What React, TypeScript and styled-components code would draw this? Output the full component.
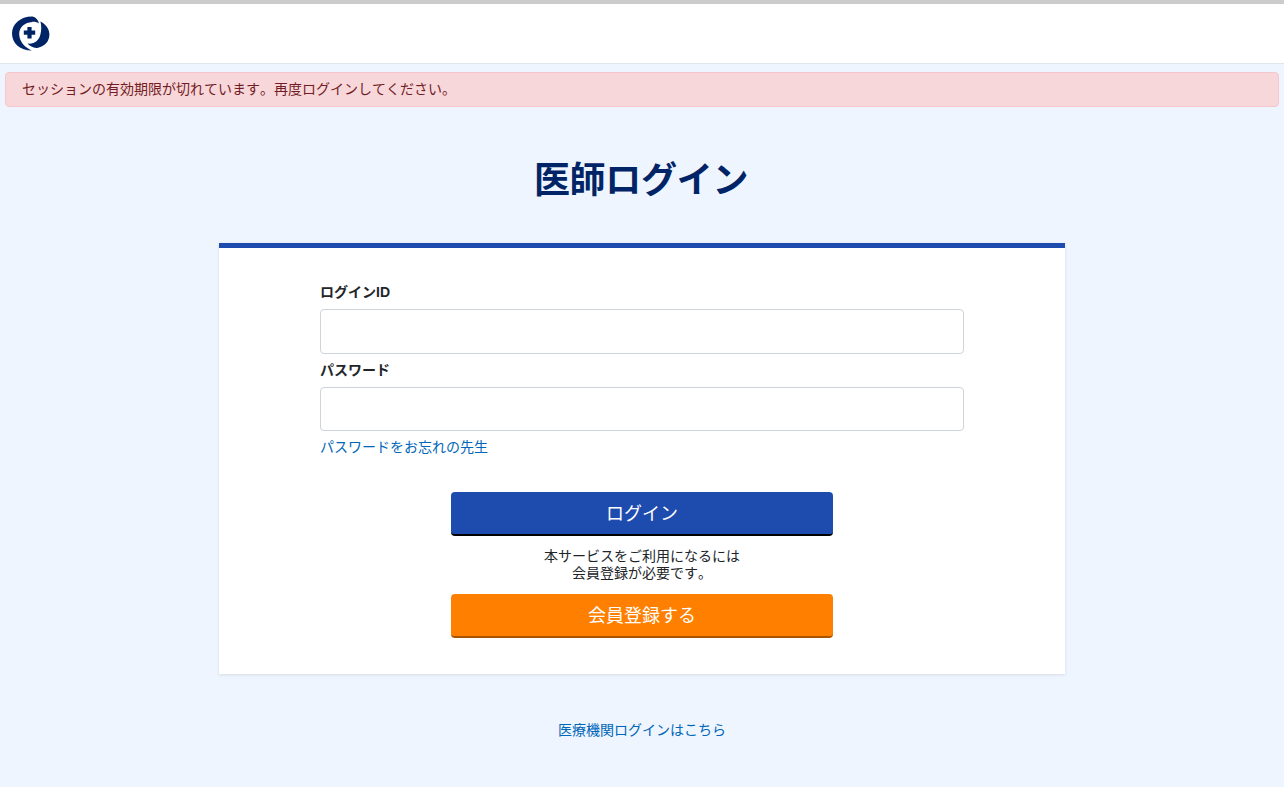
import React from "react";
import styled, { createGlobalStyle } from "styled-components";

const Global = createGlobalStyle`
  html, body { margin: 0; padding: 0; }
  body {
    background: #eef5fe;
    color: #212529;
    font-family: "Liberation Sans", "Noto Sans CJK JP", sans-serif;
    font-size: 14px;
    line-height: 17px;
    text-spacing-trim: space-all;
    font-kerning: none;
    font-feature-settings: "chws" 0, "palt" 0, "kern" 0;
  }
  * { box-sizing: border-box; }
`;

const Page = styled.div`
  min-height: 787px;
  display: flex;
  flex-direction: column;
`;

const Header = styled.header`
  height: 64px;
  background: #fff;
  border-top: 4px solid #cccccc;
  border-bottom: 1px solid #dde6ef;
  padding: 12px 0 0 12px;
`;

const Alert = styled.div`
  margin: 8px 5px 0;
  height: 35px;
  padding: 8px 16px;
  background: #f8d7da;
  border: 1px solid #f5c6cb;
  border-radius: 4px;
  color: #721c24;
`;

const Title = styled.h1`
  margin: 52px 0 0;
  height: 44px;
  padding-right: 2px;
  line-height: 44px;
  text-align: center;
  font-size: 36px;
  font-weight: 700;
  letter-spacing: -0.3px;
  color: #002466;
`;

const Card = styled.main`
  width: 846px;
  height: 431px;
  margin: 40px auto 0;
  padding: 36px 101px 0;
  background: #fff;
  border-top: 5px solid #1e4bae;
  box-shadow: 0 1px 3px rgba(0, 0, 0, 0.1);
`;

const Label = styled.label`
  display: block;
  height: 17px;
  font-weight: 700;
  margin-bottom: 8px;
`;

const Input = styled.input<{ $h: number }>`
  display: block;
  width: 100%;
  height: ${(p) => p.$h}px;
  margin-bottom: 8px;
  border: 1px solid #ced4da;
  border-radius: 4px;
  background: #fff;
`;

const TextLink = styled.a`
  color: #0066b8;
  text-decoration: none;
`;

const ForgotRow = styled.div`
  height: 17px;
`;

const Actions = styled.div`
  margin-top: 36px;
  display: flex;
  flex-direction: column;
  align-items: center;
`;

const Button = styled.button<{ $bg: string; $edge: string }>`
  width: 382px;
  height: 44px;
  padding: 2px 0 0;
  border: 0;
  border-bottom: 2px solid ${(p) => p.$edge};
  border-radius: 4px;
  background: ${(p) => p.$bg};
  color: #fff;
  font-family: inherit;
  font-size: 18px;
  line-height: 22px;
`;

const Note = styled.p`
  margin: 12px 0;
  text-align: center;
`;

const Footer = styled.div`
  margin-top: 48px;
  text-align: center;
`;

const Logo = () => (
  <svg width="38" height="36" viewBox="0 0 38 36" style={{ display: "block" }}>
    <path
      fill="#002466"
      d="M20.5 0.6C8.5 0.4 0 8 0 17.6C0 27.4 8 34.6 20 34.6C14 32 7.2 26.6 7.2 18C7.2 11 13 6.4 20 5.9C23 5.7 25.5 6.4 27 7.4C26 3.6 23.5 1.4 20.5 0.6Z"
    />
    <path
      fill="#002466"
      d="M28.4 5.5C29.5 9 29.6 14 28.4 18.5C27 24.5 22 28.6 15.5 27.6C18 30.4 22 32.6 26 31.8C32.6 30.6 37.4 25.5 37.4 18.6C37.4 12.5 33.5 8 28.4 5.5Z"
    />
    <path fill="#002466" d="M15.4 11h4.2v3.6h3.6v4.2h-3.6v3.6h-4.2v-3.6h-3.6v-4.2h3.6Z" />
  </svg>
);

export default function App() {
  return (
    <Page>
      <Global />
      <Header>
        <Logo />
      </Header>
      <Alert>セッションの有効期限が切れています。再度ログインしてください。</Alert>
      <Title>医師ログイン</Title>
      <Card>
        <Label>ログインID</Label>
        <Input $h={45} type="text" />
        <Label>パスワード</Label>
        <Input $h={44} type="password" />
        <ForgotRow>
          <TextLink href="#">パスワードをお忘れの先生</TextLink>
        </ForgotRow>
        <Actions>
          <Button $bg="#1e4bae" $edge="#000">ログイン</Button>
          <Note>
            本サービスをご利用になるには
            <br />
            会員登録が必要です。
          </Note>
          <Button $bg="#ff8000" $edge="#a85400">会員登録する</Button>
        </Actions>
      </Card>
      <Footer>
        <TextLink href="#">医療機関ログインはこちら</TextLink>
      </Footer>
    </Page>
  );
}
